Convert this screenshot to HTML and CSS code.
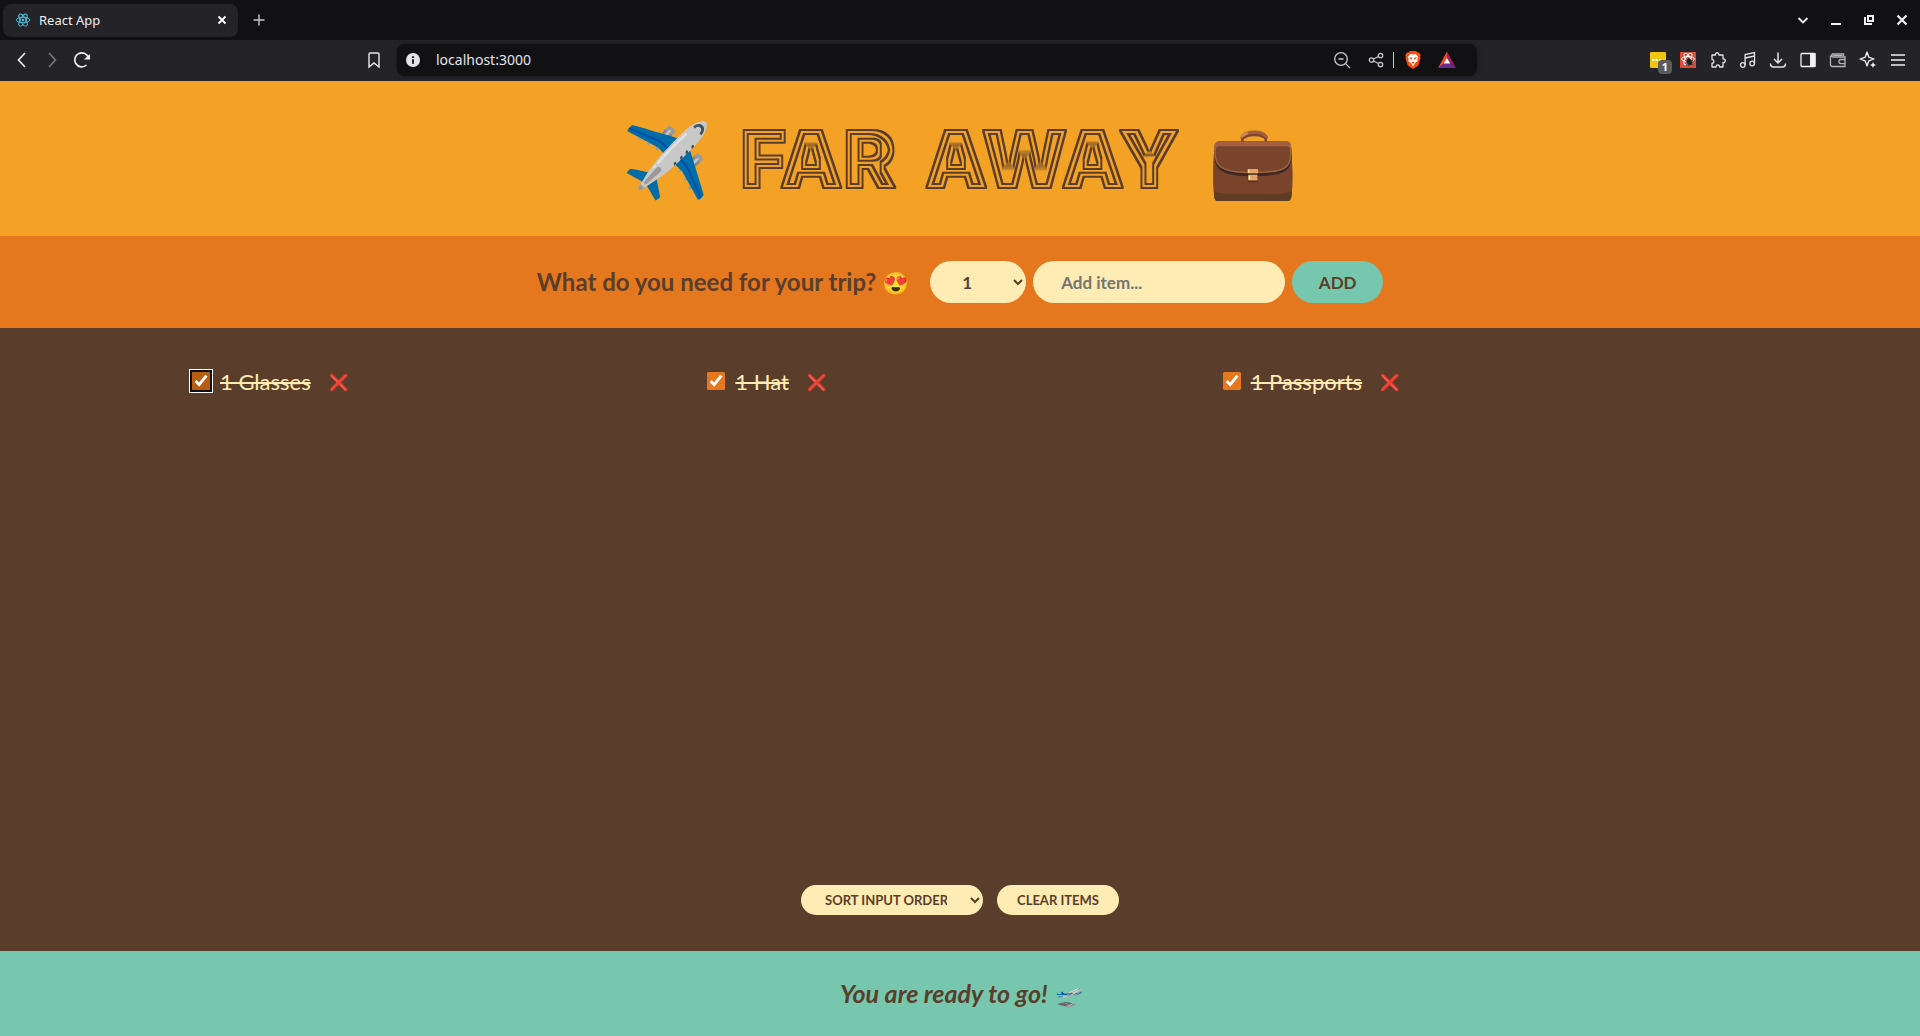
FILE: index.html
```html
<!DOCTYPE html>
<html lang="en">
<head>
<meta charset="utf-8">
<title>React App</title>
<link rel="stylesheet" href="styles.css">
</head>
<body>
<svg class="defs" width="0" height="0" aria-hidden="true">
  <filter id="inline" x="-5%" y="-5%" width="110%" height="110%">
    <feMorphology in="SourceGraphic" operator="dilate" radius="1" result="a"/>
    <feMorphology in="a" operator="erode" radius="2" result="b"/>
    <feMorphology in="a" operator="erode" radius="4" result="c"/>
    <feMorphology in="a" operator="erode" radius="6" result="d"/>
    <feComposite in="a" in2="b" operator="out" result="outer"/>
    <feComposite in="c" in2="d" operator="out" result="inner"/>
    <feMerge><feMergeNode in="outer"/><feMergeNode in="inner"/></feMerge>
  </filter>
</svg>

<div class="browser">
  <div class="tabs">
    <div class="tab">
      <svg class="favicon" width="16" height="16" viewBox="0 0 16 16" fill="none" stroke="#58c4dc" stroke-width="0.9"><rect width="16" height="16" fill="#20232a" stroke="none"/><ellipse cx="8" cy="8" rx="6.8" ry="2.7"/><ellipse cx="8" cy="8" rx="6.8" ry="2.7" transform="rotate(60 8 8)"/><ellipse cx="8" cy="8" rx="6.8" ry="2.7" transform="rotate(120 8 8)"/><circle cx="8" cy="8" r="1.2" fill="#58c4dc" stroke="none"/></svg>
      <span class="tab-title">React App</span>
      <button class="icon" aria-label="Close tab"><svg width="16" height="16" viewBox="0 0 16 16" stroke="#fff" stroke-width="1.8"><path d="M4.5 4.5l7 7M11.500 4.500l-7 7"/></svg></button>
    </div>
    <button class="icon" aria-label="New tab"><svg width="16" height="16" viewBox="0 0 16 16" stroke="#c8c8cc" stroke-width="1.4"><path d="M8 2.500v11M2.500 8h11"/></svg></button>
    <div class="window-controls">
      <button class="icon" aria-label="Search tabs"><svg width="16" height="16" viewBox="0 0 16 16" fill="none" stroke="#f0f0f0" stroke-width="1.8"><path d="M3.500 6L8 10.500 12.500 6"/></svg></button>
      <button class="icon" aria-label="Minimize"><svg width="16" height="16" viewBox="0 0 16 16" stroke="#f0f0f0" stroke-width="2"><path d="M3 12h10"/></svg></button>
      <button class="icon" aria-label="Restore"><svg width="16" height="16" viewBox="0 0 16 16" fill="none" stroke="#f0f0f0" stroke-width="2"><path d="M7 4h5v5H7zM4 5v7h7"/></svg></button>
      <button class="icon" aria-label="Close window"><svg width="16" height="16" viewBox="0 0 16 16" stroke="#f0f0f0" stroke-width="2.2"><path d="M3.500 3.500l9 9M12.500 3.500l-9 9"/></svg></button>
    </div>
  </div>
  <div class="toolbar">
    <div class="nav">
      <button class="icon" aria-label="Back"><svg width="18" height="18" viewBox="0 0 18 18" fill="none" stroke="#f0f0f2" stroke-width="1.6"><path d="M12 2L5.500 9l6.500 7"/></svg></button>
      <button class="icon" aria-label="Forward"><svg width="18" height="18" viewBox="0 0 18 18" fill="none" stroke="#77777c" stroke-width="1.6"><path d="M6 2l6.500 7L6 16"/></svg></button>
      <button class="icon" aria-label="Reload"><svg width="18" height="18" viewBox="0 0 18 18" fill="none" stroke="#f0f0f2" stroke-width="1.7"><path d="M13.500 14A7 7 0 1 1 15.500 7"/><path d="M11 8.500h6V3z" fill="#f0f0f2" stroke="none"/></svg></button>
    </div>
    <button class="icon" aria-label="Bookmark"><svg width="18" height="18" viewBox="0 0 18 18" fill="none" stroke="#e8e8ea" stroke-width="1.4"><path d="M4 3.200Q4 2 5.200 2h7.600Q14 2 14 3.200V16l-5-4-5 4z"/></svg></button>
    <div class="address">
      <svg width="14" height="14" viewBox="0 0 14 14"><circle cx="7" cy="7" r="7" fill="#e4e4e8"/><path d="M6 6.200h2v4.600H6zM6 3.200h2v1.900H6z" fill="#222"/></svg>
      <input class="url" type="text" aria-label="Address" value="localhost:3000">
      <button class="icon" aria-label="Zoom"><svg width="18" height="18" viewBox="0 0 18 18" fill="none" stroke="#c8c8cc" stroke-width="1.3"><circle cx="8" cy="8" r="6.300"/><path d="M5.500 8h5M12.600 12.600L17 17"/></svg></button>
      <button class="icon" aria-label="Share"><svg width="18" height="18" viewBox="0 0 18 18" fill="none" stroke="#c8c8cc" stroke-width="1.300"><circle cx="4.500" cy="9" r="2.200"/><circle cx="13.500" cy="4.500" r="2.200"/><circle cx="13.500" cy="13.500" r="2.200"/><path d="M6.500 8l5-2.500M6.500 10l5 2.500"/></svg></button>
      <span class="divider"></span>
      <button class="icon" aria-label="Brave Shields"><svg width="18" height="18" viewBox="0 0 18 18"><path d="M6 0h6l1.500 1.600 1.700-.2L16.700 4.500l-.5 1.200.4 1.300-2.400 7.600L9 18l-5.200-3.400L1.400 7l.4-1.300L1.300 4.500l1.500-3.100 1.700.2z" fill="#ff4d0d"/><path d="M9 3.500l2.800-.5 2.400 3-1 2.600.5 1.400-2.700 2L9 15.200 7 12 4.300 10l.5-1.400-1-2.600 2.400-3z" fill="#fff"/><path d="M5 6l3 .8-.5 2.400zM13 6l-3 .8.5 2.400zM7.300 11.500L9 10.500l1.700 1L9 12.800z" fill="#ff4d0d"/></svg></button>
      <button class="icon" aria-label="Brave Rewards"><svg width="18" height="18" viewBox="0 0 18 18"><path d="M9 .5L0 17l9-6z" fill="#ff4724"/><path d="M9 .5L18 17 9 9z" fill="#9e1f63"/><path d="M0 17h18l-6-5H6z" fill="#662d91"/><path d="M9 7l3.300 5.600H5.700z" fill="#fff"/></svg></button>
    </div>
    <div class="extensions">
      <button class="icon" aria-label="Notes"><svg width="16" height="16" viewBox="0 0 16 16"><rect width="16" height="16" rx="1" fill="#f1c40f"/><path d="M2 7h2.400v2H2zM5.500 7h2.400v2H5.500zM9 7h2v2H9z" fill="#fff"/></svg><span class="badge">1</span></button>
      <button class="icon" aria-label="React Developer Tools"><svg width="16" height="16" viewBox="0 0 16 16" fill="none" stroke="#fff" stroke-width="1"><rect width="16" height="16" fill="#dd4b39" stroke="none"/><ellipse cx="8" cy="7" rx="6.500" ry="2.500"/><ellipse cx="8" cy="7" rx="6.500" ry="2.500" transform="rotate(60 8 7)"/><ellipse cx="8" cy="7" rx="6.500" ry="2.500" transform="rotate(120 8 7)"/><ellipse cx="9.500" cy="10" rx="2.800" ry="3.500" fill="#222" stroke="none" transform="rotate(-35 9.500 10)"/><path d="M5 8l8 5M9 6l-1 8M13 8l-7 5" stroke="#222" stroke-width=".8"/></svg></button>
      <button class="icon" aria-label="Extensions"><svg width="18" height="18" viewBox="0 0 18 18" fill="none" stroke="#e4e4e8" stroke-width="1.300" stroke-linejoin="round"><path d="M3 4h3.500C5.800 1 10.500 1 9.800 4H14v4c3-.7 3 4.200 0 3.500V16h-3.500c.6-2.800-4-2.800-3.400 0H3v-3.800c2.500.4 2.500-3.900 0-3.500z"/></svg></button>
      <button class="icon" aria-label="Media"><svg width="18" height="18" viewBox="0 0 18 18" fill="none" stroke="#e4e4e8" stroke-width="1.300"><circle cx="3.800" cy="14" r="2.300"/><circle cx="13.200" cy="12.500" r="2.300"/><path d="M6.100 14V3.500l9.400-2v11M6.100 7l9.400-2"/></svg></button>
      <button class="icon" aria-label="Downloads"><svg width="18" height="18" viewBox="0 0 18 18" fill="none" stroke="#e4e4e8" stroke-width="1.500"><path d="M9 1.500v10M5 8l4 4 4-4M1.500 12.500q0 3.500 3 3.500h9q3 0 3-3.500"/></svg></button>
      <button class="icon" aria-label="Side panel"><svg width="18" height="18" viewBox="0 0 18 18"><rect x="2" y="2.500" width="14" height="13" rx="1" fill="none" stroke="#f0f0f2" stroke-width="1.300"/><path d="M11 2h5.500v14H11z" fill="#f0f0f2"/></svg></button>
      <button class="icon" aria-label="Wallet"><svg width="18" height="18" viewBox="0 0 18 18" fill="none" stroke="#b4b4b8" stroke-width="1.300"><path d="M14.500 5V2.800H3.500a1.800 1.800 0 0 0 0 3.200H16v9.500H3.500q-2 0-2-2v-9M16 8.500h-4a2 2 0 0 0 0 4.200h4M3.500 4.400h10"/></svg></button>
      <button class="icon" aria-label="Leo"><svg width="18" height="18" viewBox="0 0 18 18" fill="none" stroke="#f0f0f2" stroke-width="1.300" stroke-linejoin="round"><path d="M8 1l1.800 5.200L15 8 9.800 9.800 8 15 6.200 9.800 1 8l5.200-1.800z"/><path d="M14 11l.9 2.100 2.100.9-2.100.9L14 17l-.9-2.100L11 14l2.100-.9z" fill="#f0f0f2" stroke="none"/></svg></button>
      <button class="icon" aria-label="Menu"><svg width="18" height="18" viewBox="0 0 18 18" stroke="#f0f0f2" stroke-width="1.500"><path d="M2 4h14M2 9h14M2 14h14"/></svg></button>
    </div>
  </div>
</div>

<main class="app">
  <h1 class="logo"><span>✈️</span><span class="word">FAR</span><span class="word">AWAY</span><span>💼</span></h1>

  <form class="add-form">
    <h3 class="question">What do you need for your trip? <span class="face">😍</span></h3>
    <select class="control quantity" aria-label="Quantity"><option>1</option><option>2</option><option>3</option></select>
    <input class="control item-name" type="text" aria-label="Item" placeholder="Add item...">
    <button class="control add" type="button">ADD</button>
  </form>

  <div class="list">
    <ul class="items">
      <li class="item"><input class="check focused" type="checkbox" id="glasses" checked><label class="packed" for="glasses">1 Glasses</label><button class="remove" aria-label="Remove Glasses">❌</button></li>
      <li class="item"><input class="check" type="checkbox" id="hat" checked><label class="packed" for="hat">1 Hat</label><button class="remove" aria-label="Remove Hat">❌</button></li>
      <li class="item"><input class="check" type="checkbox" id="passports" checked><label class="packed" for="passports">1 Passports</label><button class="remove" aria-label="Remove Passports">❌</button></li>
    </ul>
    <div class="actions">
      <select class="small sort" aria-label="Sort"><option>SORT INPUT ORDER</option><option>SORT DESCRIPTION</option></select>
      <button class="small clear">CLEAR ITEMS</button>
    </div>
  </div>

  <footer class="stats"><em>You are ready to go! <span class="face">🛫</span></em></footer>
</main>
</body>
</html>
```
FILE: styles.css
```css
* { box-sizing: border-box; margin: 0; padding: 0; }

body {
  display: flex;
  flex-direction: column;
  min-height: 100vh;
  color: #5a3e2b;
  font-family: Lato, sans-serif;
}

button { border: none; background: none; color: inherit; font-family: inherit; cursor: pointer; }
.defs { position: absolute; }
svg { display: block; }

/* Browser window */
.browser { background: #242328; font-family: "Noto Sans", sans-serif; color: #f0f0f2; }
.tabs { display: flex; align-items: center; gap: 12px; height: 40px; padding: 0 9px 0 3px; background: #111113; }
.tab {
  display: flex;
  align-items: center;
  gap: 8px;
  width: 235px;
  height: 33px;
  padding: 0 7px 0 12px;
  border-radius: 8px;
  background: #242328;
}
.tab-title { flex: 1; font-size: 13px; }
.icon { position: relative; flex: none; }
.tabs .icon { padding: 0 1px; }
.window-controls { display: flex; gap: 15px; margin-left: auto; }
.toolbar { display: flex; align-items: center; height: 41px; padding: 0 13px 2px; }
.nav { display: flex; gap: 12px; width: 352px; }
.address {
  display: flex;
  align-items: center;
  gap: 16px;
  flex: 1;
  height: 32px;
  margin-left: 14px;
  padding: 0 21px 0 9px;
  border-radius: 8px;
  background: #111113;
  box-shadow: 0 0 4px #151518;
}
.url { flex: 1; min-width: 0; border: none; outline: none; background: none; color: #e4e4e8; font: 14px "Noto Sans", sans-serif; }
.divider { width: 1px; height: 16px; margin: 0 -6px 0 -8px; background: #c8c8cc; }
.extensions { display: flex; align-items: center; gap: 12px; padding-left: 172px; }
.extensions .icon { display: flex; justify-content: center; width: 18px; }
.badge {
  position: absolute;
  left: 9px;
  top: 8px;
  width: 14px;
  height: 14px;
  border-radius: 4px;
  background: #5b5b5e;
  color: #fff;
  font: 700 11px/14px "Noto Sans", sans-serif;
  text-align: center;
}

/* Packing list */
.app { display: flex; flex-direction: column; flex: 1; }
.logo {
  display: flex;
  justify-content: center;
  gap: 28px;
  padding: 24px 0;
  background: #f4a226;
  font-size: 72px;
  font-weight: 400;
  line-height: 107px;
}
.word { font-family: Inter, sans-serif; font-size: 80px; font-weight: 900; filter: url(#inline); }

.add-form {
  display: flex;
  align-items: center;
  justify-content: center;
  gap: 7px;
  padding: 25px 0;
  background: #e5771f;
}
.question { margin-right: 14px; font-size: 24px; line-height: 32px; }
.face { font-size: 22px; line-height: 1; }
.control {
  height: 42px;
  border: none;
  border-radius: 21px;
  background: #ffebb3;
  color: #5a3e2b;
  font: 700 17px Lato, sans-serif;
}
.quantity { width: 96px; padding: 0 28px; }
.item-name { width: 252px; padding: 0 28px; }
.item-name::placeholder { color: #757575; }
.add { width: 91px; background: #76c7ad; }

.list {
  display: flex;
  flex-direction: column;
  align-items: center;
  justify-content: space-between;
  flex: 1;
  padding: 36px 0;
  background: #5a3e2b;
  color: #ffebb3;
}
.items { display: grid; grid-template-columns: repeat(3, 1fr); gap: 10px; width: 80%; list-style: none; }
.item { display: flex; align-items: center; height: 34px; }
.check { width: 18px; height: 18px; margin-right: 10px; accent-color: #e5771f; }
.focused { border-radius: 2px; outline: 2px solid #101010; box-shadow: 0 0 0 3px #fff; accent-color: #b85c14; }
.packed { font-size: 22px; text-decoration: line-through; }
.remove { padding: 2px 18px 0; font-size: 16px; }

.actions { display: flex; gap: 14px; }
.small {
  height: 30px;
  border: none;
  border-radius: 15px;
  background: #ffebb3;
  color: #5a3e2b;
  font: 700 13px Lato, sans-serif;
}
.sort { width: 182px; padding: 0 20px; }
.clear { width: 122px; }

.stats { padding: 26px 0 27px; background: #76c7ad; font-size: 25px; font-weight: 700; line-height: 32px; text-align: center; }
```
